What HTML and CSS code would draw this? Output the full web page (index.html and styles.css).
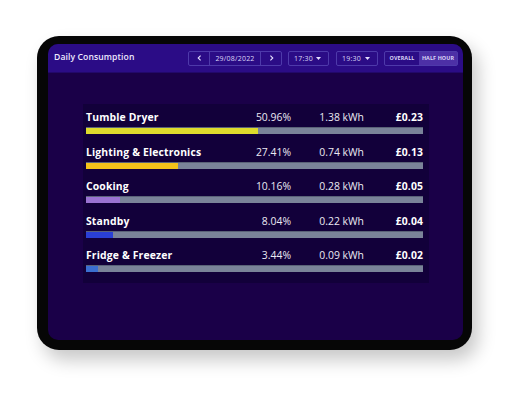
FILE: index.html
```html
<!DOCTYPE html>
<html lang="en">
<head>
<meta charset="utf-8">
<title>Daily Consumption</title>
<link rel="stylesheet" href="styles.css">
</head>
<body>
<div class="page">
  <div class="tablet">
    <div class="screen">
      <div class="header">
        <div class="title">Daily Consumption</div>
        <div class="controls">
          <div class="group date-group">
            <div class="cell arrow">
              <svg width="5" height="6" viewBox="0 0 5 6"><path d="M3.6 0.6 L1.2 3 L3.6 5.4" fill="none" stroke="#e6e0ff" stroke-width="1.1"/></svg>
            </div>
            <div class="cell date">29/08/2022</div>
            <div class="cell arrow">
              <svg width="5" height="6" viewBox="0 0 5 6"><path d="M1.4 0.6 L3.8 3 L1.4 5.4" fill="none" stroke="#e6e0ff" stroke-width="1.1"/></svg>
            </div>
          </div>
          <div class="group select">
            <span>17:30</span>
            <svg width="5" height="3" viewBox="0 0 5 3"><path d="M0 0 H5 L2.5 3 Z" fill="#e6e0ff"/></svg>
          </div>
          <div class="group select">
            <span>19:30</span>
            <svg width="5" height="3" viewBox="0 0 5 3"><path d="M0 0 H5 L2.5 3 Z" fill="#e6e0ff"/></svg>
          </div>
          <div class="group toggle">
            <div class="cell opt">OVERALL</div>
            <div class="cell opt active">HALF HOUR</div>
          </div>
        </div>
      </div>
      <div class="body">
        <div class="card">
          <div class="row">
            <div class="line">
              <span class="label">Tumble Dryer</span>
              <span class="val">50.96%</span>
              <span class="val">1.38 kWh</span>
              <span class="cost">£0.23</span>
            </div>
            <div class="track"><div class="fill c-yellow" style="width:50.96%"></div></div>
          </div>
          <div class="row">
            <div class="line">
              <span class="label">Lighting &amp; Electronics</span>
              <span class="val">27.41%</span>
              <span class="val">0.74 kWh</span>
              <span class="cost">£0.13</span>
            </div>
            <div class="track"><div class="fill c-gold" style="width:27.41%"></div></div>
          </div>
          <div class="row">
            <div class="line">
              <span class="label">Cooking</span>
              <span class="val">10.16%</span>
              <span class="val">0.28 kWh</span>
              <span class="cost">£0.05</span>
            </div>
            <div class="track"><div class="fill c-purple" style="width:10.16%"></div></div>
          </div>
          <div class="row">
            <div class="line">
              <span class="label">Standby</span>
              <span class="val">8.04%</span>
              <span class="val">0.22 kWh</span>
              <span class="cost">£0.04</span>
            </div>
            <div class="track"><div class="fill c-blue" style="width:8.04%"></div></div>
          </div>
          <div class="row">
            <div class="line">
              <span class="label">Fridge &amp; Freezer</span>
              <span class="val">3.44%</span>
              <span class="val">0.09 kWh</span>
              <span class="cost">£0.02</span>
            </div>
            <div class="track"><div class="fill c-sky" style="width:3.44%"></div></div>
          </div>
        </div>
      </div>
    </div>
  </div>
</div>
</body>
</html>
```
FILE: styles.css
```css
html, body {
  margin: 0;
  padding: 0;
  background: #ffffff;
}
body {
  width: 530px;
  height: 401px;
  overflow: hidden;
  font-family: "Open Sans", "Noto Sans", sans-serif;
}
.page {
  padding: 36px 0 0 37px;
}
.tablet {
  width: 435px;
  height: 314px;
  box-sizing: border-box;
  background: #060606;
  border-radius: 22px;
  padding: 8px 9px 10px 11px;
  box-shadow: 6px 10px 18px rgba(0, 0, 0, 0.22);
}
.screen {
  height: 100%;
  border-radius: 10px;
  overflow: hidden;
  background: #1a0048;
  display: flex;
  flex-direction: column;
}
.header {
  height: 29px;
  flex: none;
  background: #2b0c86;
  display: flex;
  align-items: center;
  justify-content: space-between;
  padding: 0 5px 0 6px;
  border-bottom: 1px solid #22086a;
  box-sizing: border-box;
}
.title {
  color: #eeeaff;
  font-size: 8.6px;
  font-weight: 600;
  letter-spacing: 0.1px;
  margin-top: -3px;
}
.controls {
  display: flex;
  align-items: center;
}
.group {
  height: 15px;
  box-sizing: border-box;
  border: 1px solid #4e3aaa;
  border-radius: 2px;
  display: flex;
  align-items: stretch;
  color: #dcd6f6;
  font-size: 7px;
  letter-spacing: 0.2px;
}
.date-group {
  width: 94px;
}
.cell {
  display: flex;
  align-items: center;
  justify-content: center;
}
.arrow {
  width: 20px;
}
.date {
  flex: 1;
  border-left: 1px solid #4e3aaa;
  border-right: 1px solid #4e3aaa;
}
.select {
  margin-left: 6px;
  width: 41px;
  align-items: center;
  justify-content: space-between;
  padding: 0 7px 0 5px;
}
.select + .select {
  margin-left: 7px;
  width: 42px;
}
.toggle {
  margin-left: 6px;
  width: 74px;
  font-size: 5.4px;
  font-weight: 700;
  letter-spacing: 0.1px;
}
.opt {
  width: 34px;
}
.opt.active {
  flex: 1;
  background: #4d30a6;
}
.body {
  flex: 1;
  padding: 31px 34px 0 35px;
}
.card {
  height: 179px;
  box-sizing: border-box;
  background: #12003a;
  padding: 7px 6px 0 3px;
  display: flex;
  flex-direction: column;
  gap: 11.5px;
}
.line {
  display: grid;
  grid-template-columns: 1fr 60px 73px 59px;
  align-items: center;
  height: 13px;
  font-size: 10.4px;
  line-height: 13px;
  color: #ebe9f2;
}
.label {
  color: #ffffff;
  font-weight: 700;
  letter-spacing: 0.15px;
  white-space: nowrap;
}
.val {
  text-align: right;
  font-weight: 500;
  letter-spacing: 0;
}
.cost {
  text-align: right;
  color: #ffffff;
  font-weight: 700;
  letter-spacing: 0.1px;
}
.track {
  margin-top: 3px;
  height: 7px;
  background: #7a8399;
  border-top: 1px solid #5a6278;
  box-sizing: border-box;
  display: flex;
}
.fill {
  height: 100%;
}
.c-yellow { background: #dedb2c; }
.c-gold { background: #f4c21a; }
.c-purple { background: #9a72d2; }
.c-blue { background: #2a3fd6; }
.c-sky { background: #3b6fd0; }
```
